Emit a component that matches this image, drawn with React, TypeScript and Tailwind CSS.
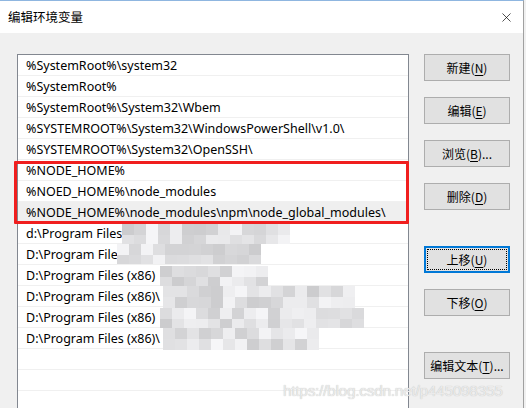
import { X } from "lucide-react";

const rows = [
  "%SystemRoot%\\system32",
  "%SystemRoot%",
  "%SystemRoot%\\System32\\Wbem",
  "%SYSTEMROOT%\\System32\\WindowsPowerShell\\v1.0\\",
  "%SYSTEMROOT%\\System32\\OpenSSH\\",
  "%NODE_HOME%",
  "%NOED_HOME%\\node_modules",
  "%NODE_HOME%\\node_modules\\npm\\node_global_modules\\",
  "d:\\Program Files\\",
  "D:\\Program File",
  "D:\\Program Files (x86)",
  "D:\\Program Files (x86)\\",
  "D:\\Program Files (x86)",
  "D:\\Program Files (x86)\\",
  "",
  "",
  "",
];

// pixelated (blurred) patches, x/y relative to the page
const mosaic = [
  { x: 122, y: 224, w: 168, h: 20 },
  { x: 117, y: 244, w: 150, h: 20 },
  { x: 160, y: 266, w: 108, h: 20 },
  { x: 163, y: 286, w: 197, h: 22 },
  { x: 160, y: 308, w: 210, h: 20 },
  { x: 163, y: 328, w: 167, h: 22 },
];

const shade = (i: number, j: number) => {
  const n = Math.abs(Math.sin(i * 12.9898 + j * 78.233) * 43758.5453) % 1;
  const v = Math.round(204 + n * 42);
  return `rgb(${v},${v},${v + 2})`;
};

const buttons = [
  { label: "新建", key: "N", top: "mt-0" },
  { label: "编辑", key: "E", top: "mt-4" },
  { label: "浏览", key: "B", tail: "...", top: "mt-4" },
  { label: "删除", key: "D", top: "mt-4" },
  { label: "上移", key: "U", top: "mt-9", focus: true },
  { label: "下移", key: "O", top: "mt-4" },
  { label: "编辑文本", key: "T", tail: "...", top: "mt-9" },
];

export default function App() {
  return (
    <div
      className="relative w-[526px] h-[408px] overflow-hidden bg-[#f0f0f0] text-[12.5px] text-black"
      style={{ fontFamily: '"Noto Sans", "Noto Sans CJK SC", sans-serif' }}
    >
      {/* Title bar */}
      <div className="h-[33px] bg-white border-t border-[#8fb6e0] border-r border-r-[#a0a0a0] mr-[2px] flex items-center justify-between pl-[8px] pr-[9px]">
        <span className="text-[12.5px]" style={{ fontFamily: '"Noto Sans CJK SC", sans-serif' }}>
          编辑环境变量
        </span>
        <X size={15} strokeWidth={1.1} />
      </div>

      <div className="flex border-r border-[#a0a0a0] mr-[2px] h-[375px]">
        {/* List */}
        <div className="ml-[17px] mt-[21px] w-[392px] h-[400px] bg-white border border-[#828790] overflow-hidden">
          {rows.map((r, i) => (
            <div
              key={i}
              className={`h-[21px] border-b border-[#f0f0f0] pl-[8px] pt-[1px] leading-[20px] whitespace-nowrap ${i === 7 ? "bg-[#efefef]" : ""}`}
            >
              {r}
            </div>
          ))}
        </div>

        {/* Buttons */}
        <div className="ml-[15px] mt-[21px] flex flex-col w-[86px]">
          {buttons.map((b) => (
            <button
              key={b.label}
              className={`${b.top} h-[27px] w-[86px] bg-[#e1e1e1] flex items-center justify-center whitespace-nowrap ${
                b.focus ? "border-2 border-[#0078d7] p-[1px]" : "border border-[#adadad]"
              }`}
              style={{ fontFamily: '"Noto Sans CJK SC", sans-serif', fontSize: "12px" }}
            >
              {b.focus ? (
                <span className="w-full h-full border border-dotted border-black flex items-center justify-center">
                  {b.label}(<span className="underline underline-offset-2">{b.key}</span>)
                </span>
              ) : (
                <span>
                  {b.label}(<span className="underline underline-offset-2">{b.key}</span>){b.tail}
                </span>
              )}
            </button>
          ))}
        </div>
      </div>

      {/* Red highlight */}
      <div className="absolute left-[14px] top-[161px] w-[395px] h-[63px] border-[3px] border-[#f01e1e] rounded-[1px]" />

      {/* Mosaic */}
      {mosaic.map((m, k) => (
        <div
          key={k}
          className="absolute flex flex-wrap overflow-hidden"
          style={{ left: m.x, top: m.y, width: m.w, height: m.h }}
        >
          {Array.from({ length: Math.ceil(m.w / 12) * Math.ceil(m.h / 11) }).map((_, c) => (
            <div key={c} className="w-[12px] h-[11px]" style={{ background: shade(k, c) }} />
          ))}
        </div>
      ))}

      {/* Watermark */}
      <div
        className="absolute left-[283px] top-[379px] text-[15.5px] text-[#ebebeb] tracking-[-0.3px]"
        style={{ fontFamily: '"Liberation Sans", sans-serif', textShadow: "0 0 1px #b8b8b8" }}
      >
        https://blog.csdn.net/p445098355
      </div>
    </div>
  );
}
